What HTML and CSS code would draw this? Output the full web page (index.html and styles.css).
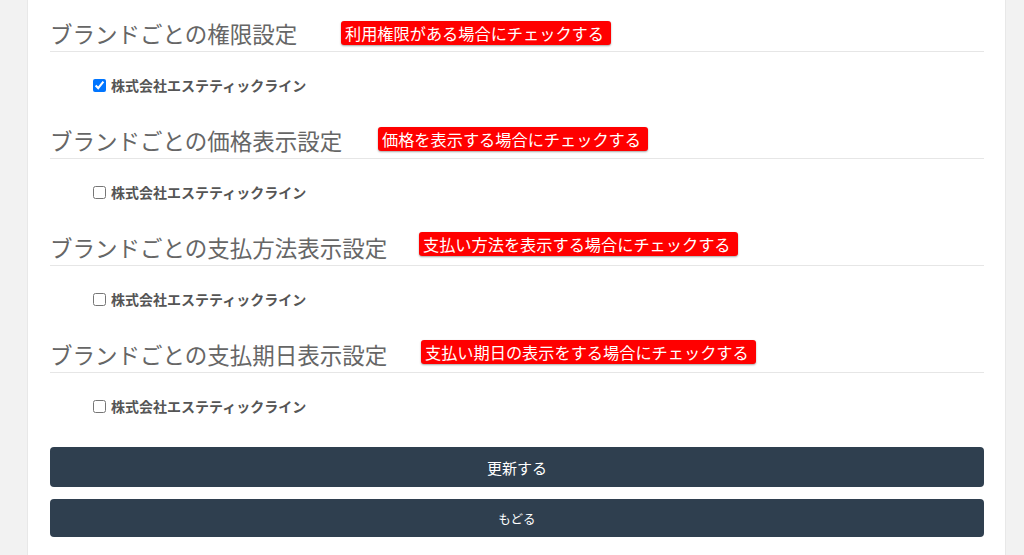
FILE: index.html
```html
<!DOCTYPE html>
<html lang="ja">
<head>
    <meta charset="UTF-8">
    <meta name="viewport" content="width=device-width, initial-scale=1.0">
    <title>ブランド設定</title>
    <link rel="stylesheet" href="styles.css">
</head>
<body>
    <div class="card">
        <form class="brand-form">
            <section class="setting">
                <h2 class="setting-title">ブランドごとの権限設定
                    <span class="note note-1">利用権限がある場合にチェックする</span>
                </h2>
                <label class="check-row">
                    <input type="checkbox" checked>
                    <span>株式会社エステティックライン</span>
                </label>
            </section>

            <section class="setting">
                <h2 class="setting-title">ブランドごとの価格表示設定
                    <span class="note note-2">価格を表示する場合にチェックする</span>
                </h2>
                <label class="check-row">
                    <input type="checkbox">
                    <span>株式会社エステティックライン</span>
                </label>
            </section>

            <section class="setting">
                <h2 class="setting-title">ブランドごとの支払方法表示設定
                    <span class="note note-3">支払い方法を表示する場合にチェックする</span>
                </h2>
                <label class="check-row">
                    <input type="checkbox">
                    <span>株式会社エステティックライン</span>
                </label>
            </section>

            <section class="setting">
                <h2 class="setting-title">ブランドごとの支払期日表示設定
                    <span class="note note-4">支払い期日の表示をする場合にチェックする</span>
                </h2>
                <label class="check-row">
                    <input type="checkbox">
                    <span>株式会社エステティックライン</span>
                </label>
            </section>

            <div class="actions">
                <button type="button" class="btn">更新する</button>
                <button type="button" class="btn btn-sm">もどる</button>
            </div>
        </form>
    </div>
</body>
</html>
```

FILE: styles.css
```css
:root {
    --navy: #2f3f4f;
    --text-gray: #666666;
    --label-gray: #555555;
    --line: #e6e6e6;
    --note-red: #ff0000;
}

* {
    margin: 0;
    padding: 0;
    box-sizing: border-box;
}

body {
    background: #f2f2f2;
    font-family: "Noto Sans CJK JP", "Noto Sans", sans-serif;
    height: 555px;
    overflow: hidden;
}

.card {
    margin-left: 27px;
    width: 979px;
    min-height: 555px;
    background: #fff;
    border-left: 1px solid #e8e8e8;
    border-right: 1px solid #e8e8e8;
    padding: 20px 21px 0 22px;
}

.setting {
    height: 107px;
}

.setting-title {
    position: relative;
    font-size: 22.5px;
    font-weight: 400;
    line-height: 27px;
    color: var(--text-gray);
    padding-bottom: 4px;
    border-bottom: 1px solid var(--line);
}

.note {
    position: absolute;
    top: 1px;
    background: var(--note-red);
    color: #fff;
    font-size: 16.2px;
    line-height: 24px;
    padding: 0 7px 0 4px;
    border-radius: 3px;
    box-shadow: 0 1px 2px rgba(0, 0, 0, 0.35);
    white-space: nowrap;
}

.note-1 { left: 291px; }
.note-2 { left: 328px; top: 0; }
.note-3 { left: 369px; top: -2px; }
.note-4 { left: 371px; top: -1px; }

.check-row {
    display: flex;
    align-items: center;
    height: 20px;
    margin-top: 23px;
    padding-left: 39px;
    font-size: 14px;
    font-weight: 700;
    color: var(--label-gray);
}

.check-row input {
    width: 13px;
    height: 13px;
    margin: 0 5px 0 4px;
}

.actions {
    display: flex;
    flex-direction: column;
    gap: 12px;
    margin-top: -1px;
}

.btn {
    height: 40px;
    border: none;
    border-radius: 4px;
    background: var(--navy);
    color: #fff;
    font-family: inherit;
    font-size: 15px;
}

.btn-sm {
    height: 38px;
    font-size: 12.5px;
}
```
